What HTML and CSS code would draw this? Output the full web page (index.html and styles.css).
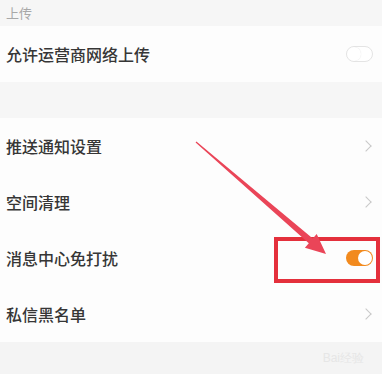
FILE: index.html
```html
<!DOCTYPE html>
<html lang="zh">
<head>
<meta charset="utf-8">
<link rel="stylesheet" href="styles.css">
</head>
<body>
<div class="page">
  <div class="section-title">上传</div>
  <div class="group">
    <div class="row">
      <span class="label">允许运营商网络上传</span>
      <span class="switch off"><span class="knob"></span></span>
    </div>
  </div>
  <div class="spacer"></div>
  <div class="group">
    <div class="row">
      <span class="label">推送通知设置</span>
      <span class="chev"></span>
    </div>
    <div class="row">
      <span class="label">空间清理</span>
      <span class="chev"></span>
    </div>
    <div class="row">
      <span class="label">消息中心免打扰</span>
      <span class="switch on"><span class="knob"></span></span>
    </div>
    <div class="row">
      <span class="label">私信黑名单</span>
      <span class="chev"></span>
    </div>
  </div>
  <div class="footer"><span class="wm">Bai经验</span></div>

  <div class="mark-box"></div>
  <svg class="arrow" width="382" height="374" viewBox="0 0 382 374">
    <polygon points="196.4,141.6 312.8,238.6 316.7,234.1 326,254 304.9,247.7 308.8,243.2 195.6,142.4" fill="#ea4558"/>
  </svg>
</div>
</body>
</html>
```
FILE: styles.css
```css
* { box-sizing: border-box; }
html, body { margin: 0; padding: 0; }
body {
  width: 382px;
  height: 374px;
  overflow: hidden;
  background: #f6f6f6;
  font-family: "Noto Sans CJK SC", "Noto Sans", sans-serif;
}
.page {
  position: relative;
  width: 382px;
  height: 374px;
  overflow: hidden;
}
.section-title {
  height: 26px;
  padding: 4px 0 0 6px;
  font-size: 13px;
  line-height: 18px;
  color: #a8a8a8;
  background: #f6f6f6;
}
.group { background: #fdfdfd; }
.row {
  height: 56px;
  display: flex;
  align-items: center;
  justify-content: space-between;
  padding: 0 0 0 6px;
}
.label {
  font-size: 16px;
  color: #363636;
  font-weight: 500;
}
.spacer { height: 36px; background: #f6f6f6; }
.chev {
  width: 8px;
  height: 8px;
  border-top: 1.5px solid #c8c8c8;
  border-right: 1.5px solid #c8c8c8;
  transform: rotate(45deg);
  margin-right: 12px;
}
.switch {
  width: 27px;
  height: 16px;
  border-radius: 8px;
  display: flex;
  align-items: center;
  margin-right: 9px;
}
.switch.off {
  border: 1px solid #e4e4e4;
  background: #fff;
}
.switch.on {
  background: #f28a1e;
  justify-content: flex-end;
}
.knob {
  width: 14px;
  height: 14px;
  border-radius: 50%;
  background: #fff;
}
.switch.off .knob { box-shadow: 0 0 1px #ddd; }
.switch.on .knob { margin-right: 1px; }
.footer {
  height: 32px;
  background: #f4f4f4;
  display: flex;
  justify-content: flex-end;
  align-items: center;
  padding-right: 18px;
}
.wm {
  font-size: 12px;
  color: #e6e6e6;
  font-family: "Liberation Sans", sans-serif;
}
.mark-box {
  position: absolute;
  left: 274px;
  top: 237px;
  width: 106px;
  height: 46px;
  border: 4px solid #e4303c;
}
.arrow {
  position: absolute;
  left: 0;
  top: 0;
}
```
